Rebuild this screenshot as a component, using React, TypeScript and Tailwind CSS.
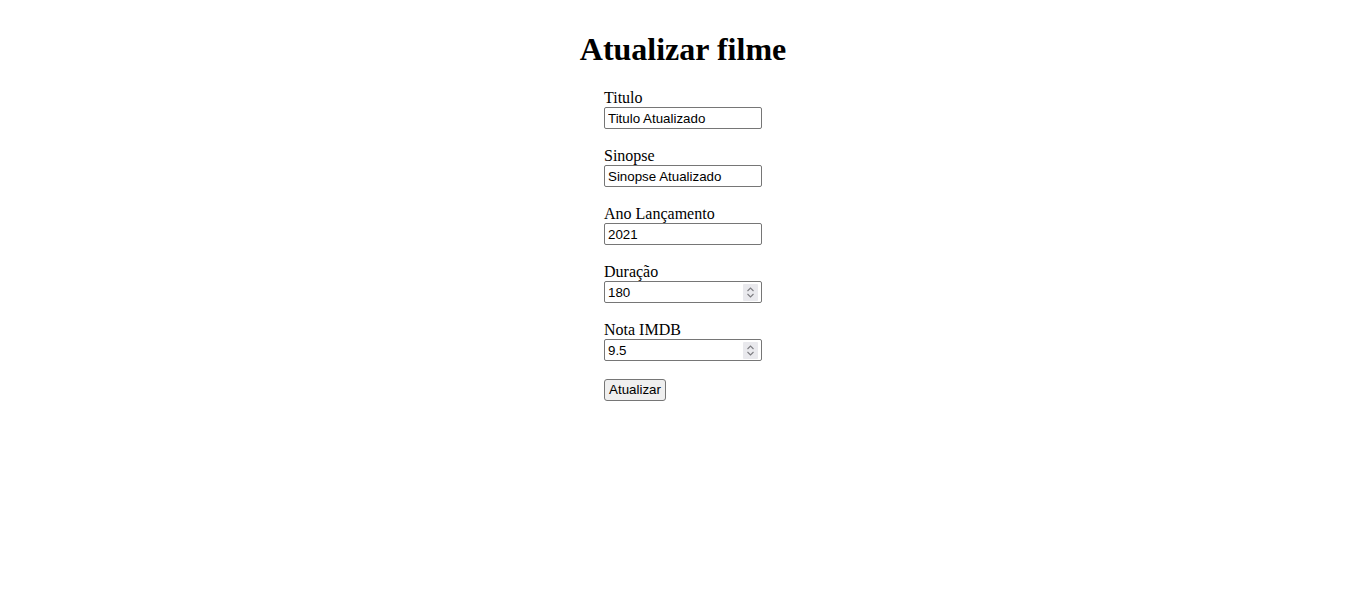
import React from 'react';

function Spinner() {
  return (
    <div className="mr-[3px] flex h-[17px] w-[15px] shrink-0 items-center justify-center rounded-[1px] bg-[#e9e9ed]">
      <svg width="9" height="13" viewBox="0 0 9 13" fill="none" stroke="#7d7d82" strokeWidth="1.1">
        <path d="M1.5 5 L4.5 2 L7.5 5" />
        <path d="M1.5 8 L4.5 11 L7.5 8" />
      </svg>
    </div>
  );
}

function Field({ label, value, number }: { label: string; value: string; number?: boolean }) {
  return (
    <div className="mb-[18px] flex flex-col">
      <label className="h-[18px] text-[16px] leading-[18px] text-black">{label}</label>
      <div className="flex h-[22px] w-[158px] items-center rounded-[2px] border border-[#767676] bg-white">
        <input
          type="text"
          readOnly
          value={value}
          className="h-full min-w-0 flex-1 bg-transparent pl-[3px] text-[13.33px] text-black outline-none"
          style={{ fontFamily: '"Liberation Sans", Arial, sans-serif' }}
        />
        {number && <Spinner />}
      </div>
    </div>
  );
}

export default function App() {
  return (
    <div
      className="min-h-screen bg-white pt-[31px]"
      style={{ fontFamily: '"Liberation Serif", "Times New Roman", serif' }}
    >
      <h1 className="mb-[22px] h-[36px] text-center text-[32px] font-bold leading-[36px] text-black">
        Atualizar filme
      </h1>
      <form className="mx-auto w-[158px]">
        <Field label="Titulo" value="Titulo Atualizado" />
        <Field label="Sinopse" value="Sinopse Atualizado" />
        <Field label="Ano Lançamento" value="2021" />
        <Field label="Duração" value="180" number />
        <Field label="Nota IMDB" value="9.5" number />
        <button
          type="button"
          className="block h-[22px] w-[62px] rounded-[3px] border border-[#767676] bg-[#efefef] text-[13.33px] text-black"
          style={{ fontFamily: '"Liberation Sans", Arial, sans-serif' }}
        >
          Atualizar
        </button>
      </form>
    </div>
  );
}
